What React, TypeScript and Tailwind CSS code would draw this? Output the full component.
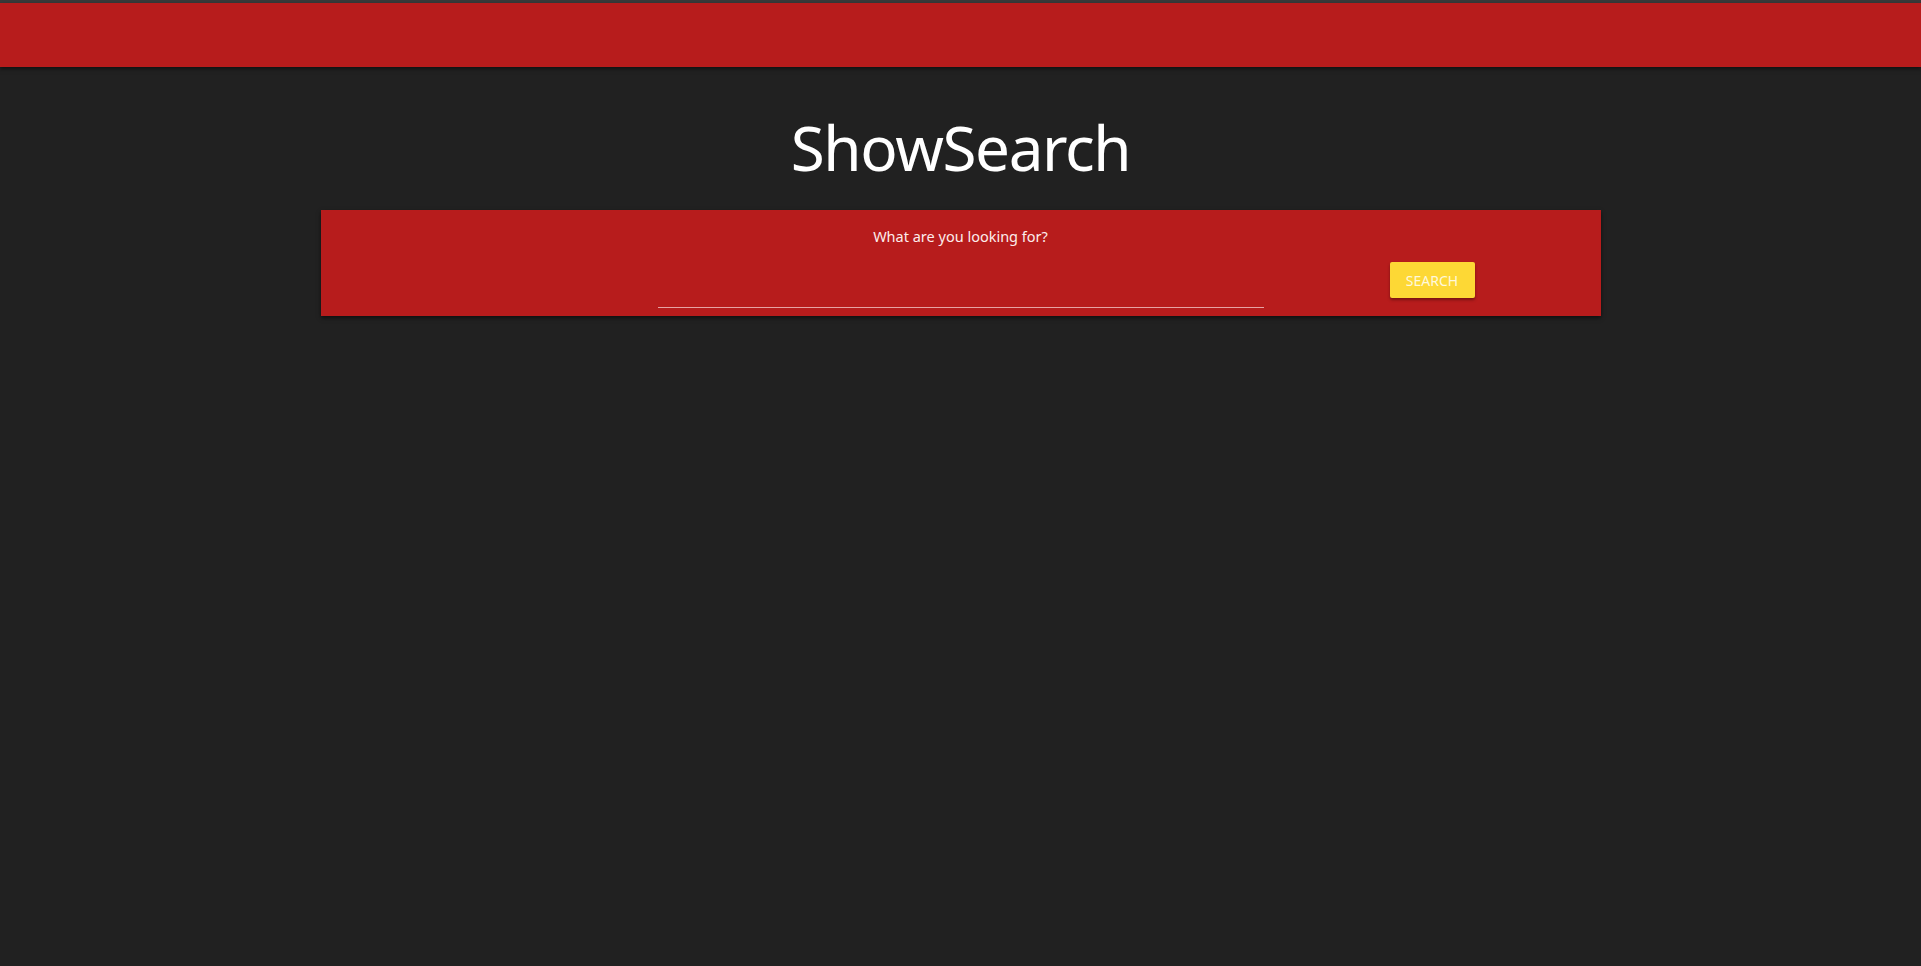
import React from "react";

export default function App() {
  return (
    <div
      className="min-h-[966px] w-full bg-[#212121] text-white"
      style={{ fontFamily: '"Noto Sans", "Open Sans", sans-serif' }}
    >
      <div className="h-[3px] bg-[#3a3a3a]" />
      <nav className="h-[64px] bg-[#b71c1c] shadow-[0_2px_4px_rgba(0,0,0,0.5)]" />
      <main className="flex flex-col items-center">
        <h1 className="mt-[44px] mb-[27px] text-[62px] leading-[72px] font-normal tracking-[-1.4px] text-white">
          ShowSearch
        </h1>
        <section className="w-[1280px] bg-[#b71c1c] shadow-[0_2px_4px_rgba(0,0,0,0.55)] pt-[15px] pb-[8px]">
          <div className="text-center text-[14.5px] leading-[22px] text-[#fdecec]">
            What are you looking for?
          </div>
          <div className="mt-[15px] flex items-start pl-[337px]">
            <div className="h-[46px] w-[606px] border-b border-[#e6a3a3]" />
            <button className="ml-[126px] h-[36px] w-[85px] rounded-[2px] bg-[#fdd835] text-[14px] uppercase text-[#fff8dc] shadow-[0_2px_3px_rgba(0,0,0,0.35)]">
              Search
            </button>
          </div>
        </section>
      </main>
    </div>
  );
}
